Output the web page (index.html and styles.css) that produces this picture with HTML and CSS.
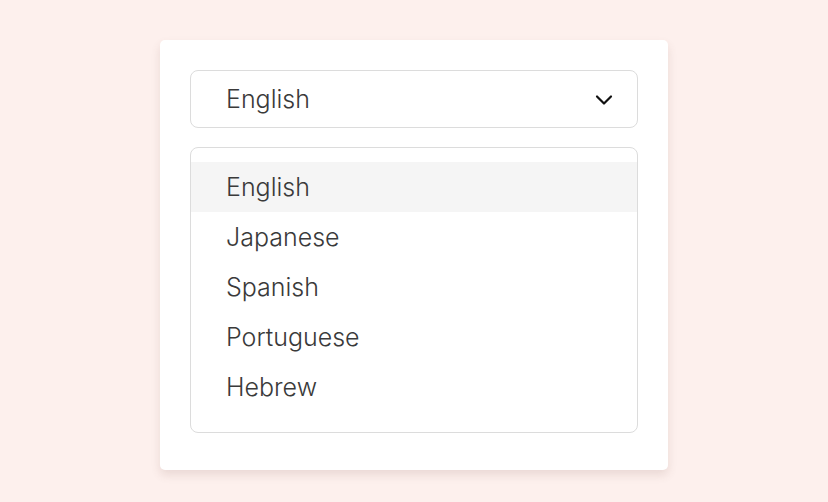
FILE: index.html
```html
<!DOCTYPE html>
<html>
<head>
<meta charset="utf-8">
<link rel="stylesheet" href="styles.css">
</head>
<body>
<div class="page">
  <div class="card">
    <div class="select">
      <span class="value">English</span>
      <svg class="chev" width="18" height="12" viewBox="0 0 18 12"><path d="M2 2.5 L9 9.5 L16 2.5" fill="none" stroke="#111" stroke-width="2.2" stroke-linecap="round" stroke-linejoin="round"/></svg>
    </div>
    <ul class="list">
      <li class="item active">English</li>
      <li class="item">Japanese</li>
      <li class="item">Spanish</li>
      <li class="item">Portuguese</li>
      <li class="item">Hebrew</li>
    </ul>
  </div>
</div>
</body>
</html>
```
FILE: styles.css
```css
html, body { margin: 0; padding: 0; }
body {
  background: #fdf0ed;
  font-family: "Inter", "Noto Sans", sans-serif;
  font-weight: 300;
  color: #3a3a3a;
}
.page {
  width: 828px;
  height: 502px;
  display: flex;
  justify-content: center;
  padding-top: 40px;
  box-sizing: border-box;
}
.card {
  width: 508px;
  height: 430px;
  box-sizing: border-box;
  background: #fff;
  border-radius: 5px;
  padding: 30px 30px 0;
  box-shadow: 0 5px 10px rgba(120, 80, 70, 0.14);
}
.select {
  height: 58px;
  box-sizing: border-box;
  border: 1.5px solid #dcdcdc;
  border-radius: 8px;
  display: flex;
  align-items: center;
  justify-content: space-between;
  padding: 0 24px 0 35px;
}
.value, .item { font-size: 25px; letter-spacing: 0; }
.chev { display: block; margin-top: 1px; }
.list {
  list-style: none;
  margin: 19px 0 0;
  padding: 14px 0 20px;
  border: 1.5px solid #dcdcdc;
  border-radius: 8px;
}
.item {
  height: 50px;
  display: flex;
  align-items: center;
  padding-left: 35px;
}
.item.active { background: #f5f5f5; }
```
